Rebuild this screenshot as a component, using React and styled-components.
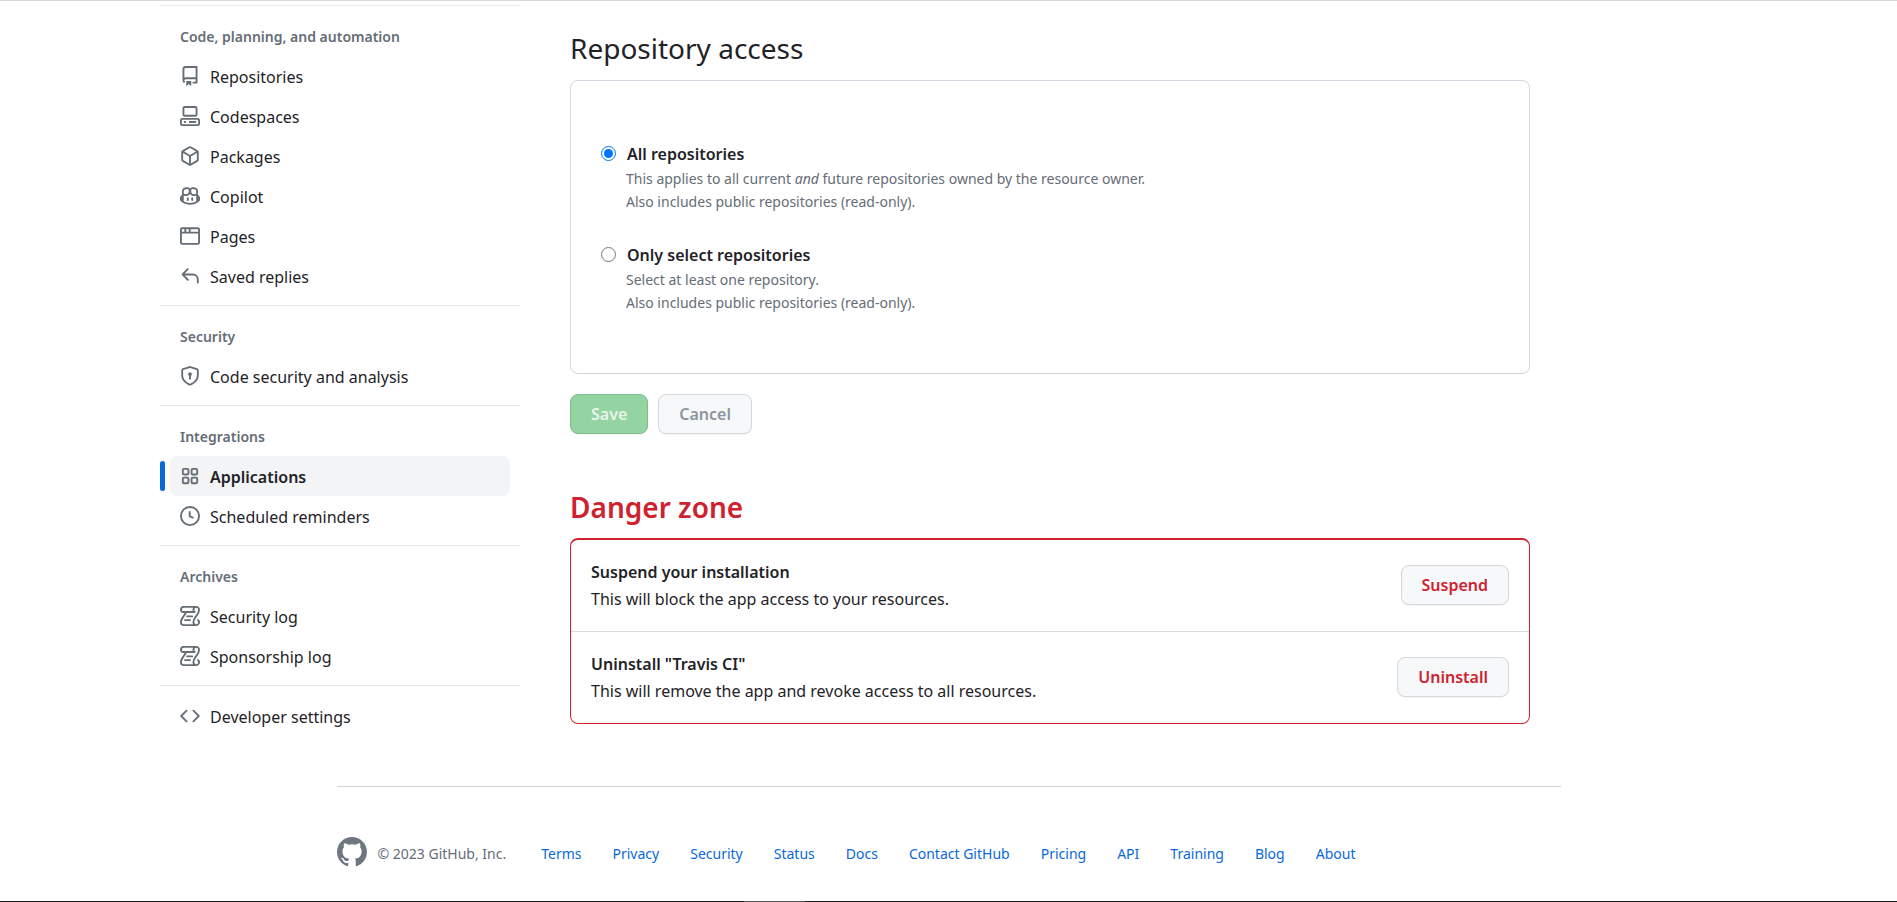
import React, { useState } from "react";
import styled, { createGlobalStyle, css } from "styled-components";

const GlobalStyle = createGlobalStyle`
  *, *::before, *::after { box-sizing: border-box; }
  body {
    margin: 0;
    background: #fff;
    color: #1f2328;
    font-family: "Noto Sans", "Open Sans", sans-serif;
    font-size: 16px;
    line-height: 27px;
  }
  h2, h3, p { margin: 0; }
`;

const icons = {
  repo: (
    <path d="M2 2.5A2.5 2.5 0 0 1 4.5 0h8.75a.75.75 0 0 1 .75.75v12.5a.75.75 0 0 1-.75.75h-2.5a.75.75 0 0 1 0-1.5h1.75v-2h-8a1 1 0 0 0-.714 1.7.75.75 0 1 1-1.072 1.05A2.495 2.495 0 0 1 2 11.5Zm10.5-1h-8a1 1 0 0 0-1 1v6.708A2.486 2.486 0 0 1 4.5 9h8ZM5 12.25a.25.25 0 0 1 .25-.25h3.5a.25.25 0 0 1 .25.25v3.25a.25.25 0 0 1-.4.2l-1.45-1.087a.249.249 0 0 0-.3 0L5.4 15.7a.25.25 0 0 1-.4-.2Z" />
  ),
  codespaces: (
    <>
      <path d="M0 11.25c0-.966.784-1.75 1.75-1.75h12.5c.966 0 1.75.784 1.75 1.75v3A1.75 1.75 0 0 1 14.25 16H1.75A1.75 1.75 0 0 1 0 14.25Zm2-9.5C2 .784 2.784 0 3.75 0h8.5C13.216 0 14 .784 14 1.75v5a1.75 1.75 0 0 1-1.75 1.75h-8.5A1.75 1.75 0 0 1 2 6.75Zm1.75-.25a.25.25 0 0 0-.25.25v5c0 .138.112.25.25.25h8.5a.25.25 0 0 0 .25-.25v-5a.25.25 0 0 0-.25-.25Zm-2 9.5a.25.25 0 0 0-.25.25v3c0 .138.112.25.25.25h12.5a.25.25 0 0 0 .25-.25v-3a.25.25 0 0 0-.25-.25Z" />
      <path d="M7 12.75a.75.75 0 0 1 .75-.75h4.5a.75.75 0 0 1 0 1.5h-4.5a.75.75 0 0 1-.75-.75Zm-4 0a.75.75 0 0 1 .75-.75h.5a.75.75 0 0 1 0 1.5h-.5a.75.75 0 0 1-.75-.75Z" />
    </>
  ),
  package: (
    <path d="m8.878.392 5.25 3.045c.54.314.872.89.872 1.514v6.098a1.75 1.75 0 0 1-.872 1.514l-5.25 3.045a1.75 1.75 0 0 1-1.756 0l-5.25-3.045A1.75 1.75 0 0 1 1 11.049V4.951c0-.624.332-1.201.872-1.514L7.122.392a1.75 1.75 0 0 1 1.756 0ZM7.875 1.69l-4.63 2.685L8 7.133l4.755-2.758-4.63-2.685a.248.248 0 0 0-.25 0ZM2.5 5.677v5.372c0 .09.047.171.125.216l4.625 2.683V8.432Zm6.25 8.271 4.625-2.683a.25.25 0 0 0 .125-.216V5.677L8.75 8.432Z" />
  ),
  copilot: (
    <>
      <path d="M7.998 15.035c-4.562 0-7.873-2.914-7.998-3.749V9.338c.085-.628.677-1.686 1.588-2.065.013-.07.024-.143.036-.218.029-.183.06-.384.126-.612-.201-.508-.254-1.084-.254-1.656 0-.87.128-1.769.693-2.484.579-.733 1.494-1.124 2.724-1.261 1.206-.134 2.262.034 2.944.765.05.053.096.108.139.165.044-.057.094-.112.143-.165.682-.731 1.738-.899 2.944-.765 1.23.137 2.145.528 2.724 1.261.566.715.693 1.614.693 2.484 0 .572-.053 1.148-.254 1.656.066.228.098.429.126.612.012.076.024.148.037.218.924.385 1.522 1.471 1.591 2.095v1.872c0 .766-3.351 3.795-8.002 3.795Zm0-1.485c2.28 0 4.584-1.11 5.002-1.433V7.862l-.023-.116c-.49.21-1.075.291-1.727.291-1.146 0-2.059-.327-2.71-.991A3.222 3.222 0 0 1 8 6.303a3.24 3.24 0 0 1-.544.743c-.65.664-1.563.991-2.71.991-.652 0-1.236-.081-1.727-.291l-.023.116v4.255c.419.323 2.722 1.433 5.002 1.433ZM6.762 2.83c-.193-.206-.637-.413-1.682-.297-1.019.113-1.479.404-1.713.7-.247.312-.369.789-.369 1.554 0 .793.129 1.171.308 1.371.162.181.519.379 1.442.379.853 0 1.339-.235 1.638-.54.315-.322.527-.827.617-1.553.117-.935-.037-1.395-.241-1.614Zm4.155-.297c-1.044-.116-1.488.091-1.681.297-.204.219-.359.679-.242 1.614.091.726.303 1.231.618 1.553.299.305.784.54 1.638.54.922 0 1.28-.198 1.442-.379.179-.2.308-.578.308-1.371 0-.765-.123-1.242-.37-1.554-.233-.296-.693-.587-1.713-.7Z" />
      <path d="M6.25 9.037a.75.75 0 0 1 .75.75v1.501a.75.75 0 0 1-1.5 0V9.787a.75.75 0 0 1 .75-.75Zm4.25.75v1.501a.75.75 0 0 1-1.5 0V9.787a.75.75 0 0 1 1.5 0Z" />
    </>
  ),
  browser: (
    <path d="M0 2.75C0 1.784.784 1 1.75 1h12.5c.966 0 1.75.784 1.75 1.75v10.5A1.75 1.75 0 0 1 14.25 15H1.75A1.75 1.75 0 0 1 0 13.25ZM14.5 6h-13v7.25c0 .138.112.25.25.25h12.5a.25.25 0 0 0 .25-.25Zm-6-3.5v2h6V2.75a.25.25 0 0 0-.25-.25ZM5 2.5v2h2v-2Zm-3.25 0a.25.25 0 0 0-.25.25V4.5h2v-2Z" />
  ),
  reply: (
    <path d="M6.78 1.97a.75.75 0 0 1 0 1.06L3.81 6h6.44A4.75 4.75 0 0 1 15 10.75v2.5a.75.75 0 0 1-1.5 0v-2.5a3.25 3.25 0 0 0-3.25-3.25H3.81l2.97 2.97a.749.749 0 0 1-.326 1.275.749.749 0 0 1-.734-.215L1.47 7.28a.75.75 0 0 1 0-1.06l4.25-4.25a.75.75 0 0 1 1.06 0Z" />
  ),
  shield: (
    <path d="m8.533.133 5.25 1.68A1.75 1.75 0 0 1 15 3.48V7c0 1.566-.32 3.182-1.303 4.682-.983 1.498-2.585 2.813-5.032 3.855a1.697 1.697 0 0 1-1.33 0c-2.447-1.042-4.049-2.357-5.032-3.855C1.32 10.182 1 8.566 1 7V3.48a1.75 1.75 0 0 1 1.217-1.667l5.25-1.68a1.748 1.748 0 0 1 1.066 0Zm-.61 1.429.001.001-5.25 1.68a.251.251 0 0 0-.174.237V7c0 1.36.275 2.666 1.057 3.859.784 1.194 2.121 2.342 4.366 3.298a.196.196 0 0 0 .154 0c2.245-.957 3.582-2.103 4.366-3.297C13.225 9.666 13.5 8.358 13.5 7V3.48a.25.25 0 0 0-.174-.238l-5.25-1.68a.25.25 0 0 0-.153 0ZM9.5 6.5c0 .536-.286 1.032-.75 1.3v2.45a.75.75 0 0 1-1.5 0V7.8A1.5 1.5 0 1 1 9.5 6.5Z" />
  ),
  apps: (
    <g fill="none" stroke="currentColor" strokeWidth="1.5">
      <rect x="2.25" y="2.25" width="4.5" height="4.5" rx="1" />
      <rect x="9.25" y="2.25" width="4.5" height="4.5" rx="1" />
      <rect x="2.25" y="9.25" width="4.5" height="4.5" rx="1" />
      <rect x="9.25" y="9.25" width="4.5" height="4.5" rx="1" />
    </g>
  ),
  clock: (
    <path d="M8 0a8 8 0 1 1 0 16A8 8 0 0 1 8 0ZM1.5 8a6.5 6.5 0 1 0 13 0 6.5 6.5 0 0 0-13 0Zm7-3.25v2.992l2.028.812a.75.75 0 0 1-.557 1.392l-2.5-1A.751.751 0 0 1 7 8.25v-3.5a.75.75 0 0 1 1.5 0Z" />
  ),
  log: (
    <>
      <path d="M5 8.25a.75.75 0 0 1 .75-.75h4a.75.75 0 0 1 0 1.5h-4A.75.75 0 0 1 5 8.25ZM4 10.5A.75.75 0 0 0 4 12h4a.75.75 0 0 0 0-1.5H4Z" />
      <path d="M13-.005c1.654 0 3 1.328 3 3 0 .982-.338 1.933-.783 2.818-.443.879-1.028 1.758-1.582 2.588l-.011.017c-.568.853-1.104 1.659-1.501 2.446-.398.789-.623 1.494-.623 2.136a1.5 1.5 0 1 0 2.333-1.248.75.75 0 0 1 .834-1.246A3 3 0 0 1 13 16H3a3 3 0 0 1-3-3c0-1.582.891-3.135 1.777-4.506.209-.322.418-.637.623-.946.473-.709.923-1.386 1.287-2.048H2.51c-.576 0-1.381-.133-1.907-.783A2.68 2.68 0 0 1 0 2.995a3 3 0 0 1 3-3Zm0 1.5a1.5 1.5 0 0 0-1.5 1.5c0 .476.223.834.667 1.132A.75.75 0 0 1 11.75 5.5H5.368c-.467 1.003-1.141 2.015-1.773 2.963-.192.289-.381.571-.558.845C2.13 10.711 1.5 11.916 1.5 13A1.5 1.5 0 0 0 3 14.5h7.401A2.989 2.989 0 0 1 10 13c0-.979.338-1.928.784-2.812.441-.874 1.023-1.748 1.575-2.576l.017-.026c.568-.853 1.103-1.658 1.501-2.448.398-.79.623-1.497.623-2.143 0-.838-.669-1.5-1.5-1.5Zm-10 0a1.5 1.5 0 0 0-1.5 1.5c0 .321.1.569.27.778.097.12.325.227.74.227h7.674A2.737 2.737 0 0 1 10 2.995c0-.546.146-1.059.401-1.5Z" />
    </>
  ),
  code: (
    <path d="m11.28 3.22 4.25 4.25a.75.75 0 0 1 0 1.06l-4.25 4.25a.749.749 0 0 1-1.275-.326.749.749 0 0 1 .215-.734L13.94 8l-3.72-3.72a.749.749 0 0 1 .326-1.275.749.749 0 0 1 .734.215Zm-6.56 0a.751.751 0 0 1 1.042.018.751.751 0 0 1 .018 1.042L2.06 8l3.72 3.72a.749.749 0 0 1-.326 1.275.749.749 0 0 1-.734-.215L.47 8.53a.75.75 0 0 1 0-1.06Z" />
  ),
  github: (
    <path d="M8 0C3.58 0 0 3.58 0 8c0 3.54 2.29 6.53 5.47 7.59.4.07.55-.17.55-.38 0-.19-.01-.82-.01-1.49-2.01.37-2.53-.49-2.69-.94-.09-.23-.48-.94-.82-1.13-.28-.15-.68-.52-.01-.53.63-.01 1.08.58 1.23.82.72 1.21 1.87.87 2.33.66.07-.52.28-.87.51-1.07-1.78-.2-3.64-.89-3.64-3.95 0-.87.31-1.59.82-2.15-.08-.2-.36-1.02.08-2.12 0 0 .67-.21 2.2.82.64-.18 1.32-.27 2-.27s1.36.09 2 .27c1.53-1.04 2.2-.82 2.2-.82.44 1.1.16 1.92.08 2.12.51.56.82 1.27.82 2.15 0 3.07-1.87 3.75-3.65 3.95.29.25.54.73.54 1.48 0 1.07-.01 1.93-.01 2.2 0 .21.15.46.55.38A8.01 8.01 0 0 0 16 8c0-4.42-3.58-8-8-8Z" />
  ),
};

const IconSvg = styled.svg`
  flex: none;
  display: block;
  width: ${(p) => p.$size}px;
  height: ${(p) => p.$size}px;
  fill: currentColor;
  color: ${(p) => p.$color};
`;

const Icon = ({ name, size = 20, color = "#656d76" }) => (
  <IconSvg $size={size} $color={color} viewBox="0 0 16 16" aria-hidden="true">
    {icons[name]}
  </IconSvg>
);

const Page = styled.div`
  display: flex;
  flex-direction: column;
  min-height: 100vh;
  border-top: 1px solid #d8d8d8;
`;

const Columns = styled.div`
  display: flex;
  align-items: flex-start;
  gap: 50px;
  padding: 4px 160px 0;
`;

const Sidebar = styled.nav`
  flex: none;
  width: 360px;
`;

const NavGroup = styled.section`
  border-top: 1px solid #e6e8ea;
  padding: ${(p) => (p.$untitled ? "10px" : "16px")} 10px 9px;
`;

const NavTitle = styled.h3`
  padding: 3px 10px 7px;
  font-size: 14px;
  font-weight: 600;
  line-height: 24px;
  color: #656d76;
`;

const NavList = styled.ul`
  margin: 0;
  padding: 0;
  list-style: none;
`;

const NavLink = styled.a`
  position: relative;
  display: flex;
  align-items: center;
  gap: 10px;
  height: 40px;
  padding: 0 10px;
  border-radius: 7px;
  color: #1f2328;
  text-decoration: none;

  ${(p) =>
    p.$current &&
    css`
      background: #f3f4f6;
      font-weight: 600;

      &::before {
        content: "";
        position: absolute;
        left: -10px;
        top: 5px;
        width: 5px;
        height: 30px;
        border-radius: 3px;
        background: #0969da;
      }
    `}
`;

const NavLabel = styled.span`
  padding-top: 3px;
`;

const Main = styled.main`
  flex: 1;
  min-width: 0;
  max-width: 960px;
  padding-top: 21px;
`;

const Heading = styled.h2`
  margin-top: ${(p) => (p.$danger ? "51px" : "0")};
  padding-bottom: ${(p) => (p.$danger ? "8px" : "9px")};
  font-size: 28px;
  line-height: 45px;
  font-weight: ${(p) => (p.$danger ? 600 : 400)};
  color: ${(p) => (p.$danger ? "#cf222e" : "#1f2328")};
`;

const AccessBox = styled.fieldset`
  display: flex;
  flex-direction: column;
  gap: 29px;
  margin: 0;
  padding: 60px 30px 59px;
  border: 1px solid #d0d7de;
  border-radius: 8px;
`;

const Option = styled.div`
  display: grid;
  grid-template-columns: 16px 1fr;
  column-gap: 9px;
`;

const Radio = styled.input`
  width: 15px;
  height: 15px;
  margin: 5px 0 0;
  accent-color: #0075ff;
`;

const OptionLabel = styled.label`
  padding-left: 1px;
  font-weight: 600;
  line-height: 26px;
`;

const OptionNote = styled.p`
  grid-column: 2;
  font-size: 14px;
  line-height: 23px;
  color: #656d76;
`;

const ButtonRow = styled.div`
  display: flex;
  gap: 10px;
  margin-top: 20px;
`;

const variants = {
  primary: css`
    color: rgba(255, 255, 255, 0.8);
    background: #94d3a2;
    border-color: #80bd8d;
  `,
  muted: css`
    color: #8c959f;
    background: #f6f8fa;
    border-color: #d5d8db;
  `,
  danger: css`
    color: #cf222e;
    background: #f6f8fa;
    border-color: #d5d8db;
  `,
};

const Button = styled.button`
  flex: none;
  height: 40px;
  padding: 1px 20px 0;
  border: 1px solid;
  border-radius: 8px;
  box-shadow: 0 1px 0 rgba(31, 35, 40, 0.04);
  font: inherit;
  font-weight: 600;
  ${(p) => variants[p.$variant]}
`;

const DangerBox = styled.div`
  border: 1px solid #cf222e;
  border-top-width: 2px;
  border-radius: 8px;
`;

const DangerRow = styled.div`
  display: flex;
  align-items: center;
  justify-content: space-between;
  gap: 20px;
  padding: 17px 20px 18px;

  & + & {
    border-top: 1px solid #d8dee4;
  }
`;

const DangerText = styled.div`
  padding-top: 2px;
`;

const DangerName = styled.h3`
  font-size: 16px;
  font-weight: 600;
  line-height: 27px;
`;

const Footer = styled.footer`
  display: flex;
  align-items: center;
  flex-wrap: wrap;
  width: calc(100% - 60px);
  max-width: 1224px;
  margin: 41px auto 0;
  padding: 50px 0 34px;
  border-top: 1px solid #d0d7de;
  font-size: 14px;
  line-height: 24px;
  color: #656d76;
`;

const Copyright = styled.span`
  margin: 0 35px 0 11px;
  padding-top: 3px;
`;

const FooterLinks = styled.ul`
  display: flex;
  flex-wrap: wrap;
  gap: 0 31px;
  margin: 0;
  padding: 3px 0 0;
  list-style: none;
`;

const FooterLink = styled.a`
  color: #0969da;
  text-decoration: none;
`;

const BottomEdge = styled.div`
  flex: none;
  height: 1px;
  margin-top: auto;
  background: linear-gradient(#555, #555) 744px 0 / 61px 1px no-repeat #1b1b1d;
`;

const groups = [
  {
    title: "Code, planning, and automation",
    items: [
      ["repo", "Repositories"],
      ["codespaces", "Codespaces"],
      ["package", "Packages"],
      ["copilot", "Copilot"],
      ["browser", "Pages"],
      ["reply", "Saved replies"],
    ],
  },
  { title: "Security", items: [["shield", "Code security and analysis"]] },
  {
    title: "Integrations",
    items: [
      ["apps", "Applications", true],
      ["clock", "Scheduled reminders"],
    ],
  },
  {
    title: "Archives",
    items: [
      ["log", "Security log"],
      ["log", "Sponsorship log"],
    ],
  },
  { items: [["code", "Developer settings"]] },
];

const dangerActions = [
  ["Suspend your installation", "This will block the app access to your resources.", "Suspend"],
  ['Uninstall "Travis CI"', "This will remove the app and revoke access to all resources.", "Uninstall"],
];

const footerLinks = [
  "Terms", "Privacy", "Security", "Status", "Docs", "Contact GitHub",
  "Pricing", "API", "Training", "Blog", "About",
];

export default function App() {
  const [access, setAccess] = useState("all");

  return (
    <>
      <GlobalStyle />
      <Page>
        <Columns>
          <Sidebar aria-label="Settings">
            {groups.map(({ title, items }) => (
              <NavGroup key={title || "more"} $untitled={!title}>
                {title && <NavTitle>{title}</NavTitle>}
                <NavList>
                  {items.map(([icon, label, current]) => (
                    <li key={label}>
                      <NavLink href="#" $current={current} aria-current={current ? "page" : undefined}>
                        <Icon name={icon} />
                        <NavLabel>{label}</NavLabel>
                      </NavLink>
                    </li>
                  ))}
                </NavList>
              </NavGroup>
            ))}
          </Sidebar>

          <Main>
            <Heading>Repository access</Heading>
            <AccessBox aria-label="Repository access">
              <Option>
                <Radio
                  type="radio"
                  id="access-all"
                  name="access"
                  checked={access === "all"}
                  onChange={() => setAccess("all")}
                />
                <OptionLabel htmlFor="access-all">All repositories</OptionLabel>
                <OptionNote>
                  This applies to all current <em>and</em> future repositories owned by the resource owner.
                  <br />
                  Also includes public repositories (read-only).
                </OptionNote>
              </Option>
              <Option>
                <Radio
                  type="radio"
                  id="access-select"
                  name="access"
                  checked={access === "select"}
                  onChange={() => setAccess("select")}
                />
                <OptionLabel htmlFor="access-select">Only select repositories</OptionLabel>
                <OptionNote>
                  Select at least one repository.
                  <br />
                  Also includes public repositories (read-only).
                </OptionNote>
              </Option>
            </AccessBox>
            <ButtonRow>
              <Button type="button" $variant="primary" disabled>Save</Button>
              <Button type="button" $variant="muted" disabled>Cancel</Button>
            </ButtonRow>

            <Heading $danger>Danger zone</Heading>
            <DangerBox>
              {dangerActions.map(([name, note, action]) => (
                <DangerRow key={action}>
                  <DangerText>
                    <DangerName>{name}</DangerName>
                    <p>{note}</p>
                  </DangerText>
                  <Button type="button" $variant="danger">{action}</Button>
                </DangerRow>
              ))}
            </DangerBox>
          </Main>
        </Columns>

        <Footer>
          <Icon name="github" size={30} color="#6e7781" />
          <Copyright>© 2023 GitHub, Inc.</Copyright>
          <FooterLinks>
            {footerLinks.map((label) => (
              <li key={label}>
                <FooterLink href="#">{label}</FooterLink>
              </li>
            ))}
          </FooterLinks>
        </Footer>
        <BottomEdge />
      </Page>
    </>
  );
}
